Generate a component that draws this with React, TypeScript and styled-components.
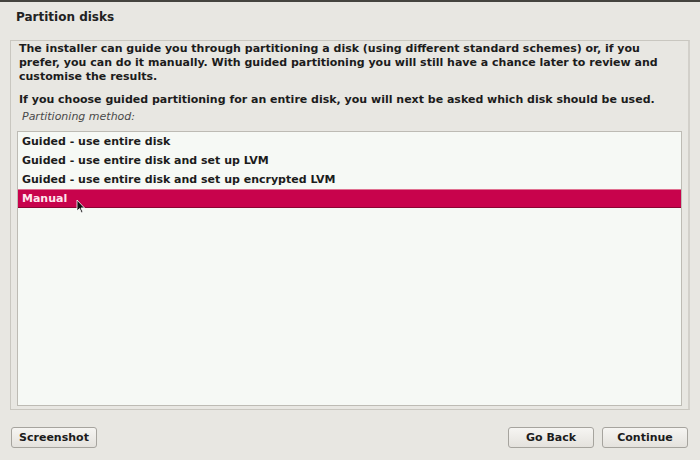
import React from "react";
import styled, { createGlobalStyle } from "styled-components";

const Global = createGlobalStyle`
  html, body { margin: 0; padding: 0; }
  body {
    width: 700px; height: 460px; overflow: hidden;
    background: #e8e7e2;
    font-family: "DejaVu Sans", "Liberation Sans", sans-serif;
    color: #1a1a1a;
  }
`;

const Screen = styled.div`
  width: 700px;
  height: 460px;
  box-sizing: border-box;
  border-top: 2px solid #45443f;
  display: flex;
  flex-direction: column;
  background: #e8e7e2;
`;

const Title = styled.h1`
  margin: 0;
  padding: 8px 0 0 16px;
  height: 31px;
  box-sizing: border-box;
  font-size: 12px;
  font-weight: bold;
  color: #222;
`;

const Panel = styled.div`
  margin: 7px 10px 0 10px;
  height: 370px;
  box-sizing: border-box;
  border: 1px solid #c9c7c0;
  border-right: 2px solid #d2d0ca;
  padding: 1px 6px 3px 6px;
  display: flex;
  flex-direction: column;
`;

const Para = styled.p`
  margin: 0 0 0 2px;
  font-size: 11px;
  font-weight: bold;
  line-height: 14px;
  color: #1c1c1c;
  white-space: nowrap;
`;

const Gap = styled.div`
  height: 9px;
`;

const Label = styled.div`
  margin: 3px 0 0 5px;
  font-size: 11px;
  font-style: italic;
  color: #4a4a4a;
  line-height: 14px;
`;

const ListBox = styled.div`
  margin-top: 7px;
  flex: 1;
  background: #f6f9f5;
  border: 1px solid #bdbbb4;
  display: flex;
  flex-direction: column;
`;

const Row = styled.div<{ $selected?: boolean }>`
  position: relative;
  height: 19px;
  line-height: 19px;
  padding-left: 4px;
  font-size: 11px;
  font-weight: bold;
  color: ${(p) => (p.$selected ? "#ffe6ee" : "#1c1c1c")};
  background: ${(p) => (p.$selected ? "#c8034c" : "transparent")};
  ${(p) => (p.$selected ? "box-shadow: inset 0 1px 0 #e07090, inset 0 -1px 0 #8c0433;" : "")}
`;

const Cursor = styled.svg`
  position: absolute;
  left: 58px;
  top: 10px;
`;

const Footer = styled.div`
  display: flex;
  align-items: center;
  padding: 17px 12px 0 11px;
  gap: 8px;
`;

const Spacer = styled.div`
  flex: 1;
`;

const Button = styled.button`
  width: 86px;
  height: 21px;
  padding: 0;
  border: 1px solid #a6a49e;
  border-radius: 3px;
  background: linear-gradient(#f6f5f2, #e4e2dd);
  font-family: "DejaVu Sans", sans-serif;
  font-size: 11px;
  font-weight: bold;
  color: #1c1c1c;
`;

export default function App() {
  return (
    <>
      <Global />
      <Screen>
        <Title>Partition disks</Title>
        <Panel>
          <Para>
            The installer can guide you through partitioning a disk (using different standard schemes) or, if you
            <br />
            prefer, you can do it manually. With guided partitioning you will still have a chance later to review and
            <br />
            customise the results.
          </Para>
          <Gap />
          <Para>If you choose guided partitioning for an entire disk, you will next be asked which disk should be used.</Para>
          <Label>Partitioning method:</Label>
          <ListBox>
            <Row>Guided - use entire disk</Row>
            <Row>Guided - use entire disk and set up LVM</Row>
            <Row>Guided - use entire disk and set up encrypted LVM</Row>
            <Row $selected>
              Manual
              <Cursor width="10" height="16" viewBox="0 0 10 16">
                <path d="M1 1 L1 12 L3.5 9.5 L5.5 14 L7 13.3 L5 9 L8.5 9 Z" fill="#111" stroke="#fff" strokeWidth="0.8" />
              </Cursor>
            </Row>
          </ListBox>
        </Panel>
        <Footer>
          <Button>Screenshot</Button>
          <Spacer />
          <Button>Go Back</Button>
          <Button>Continue</Button>
        </Footer>
      </Screen>
    </>
  );
}
